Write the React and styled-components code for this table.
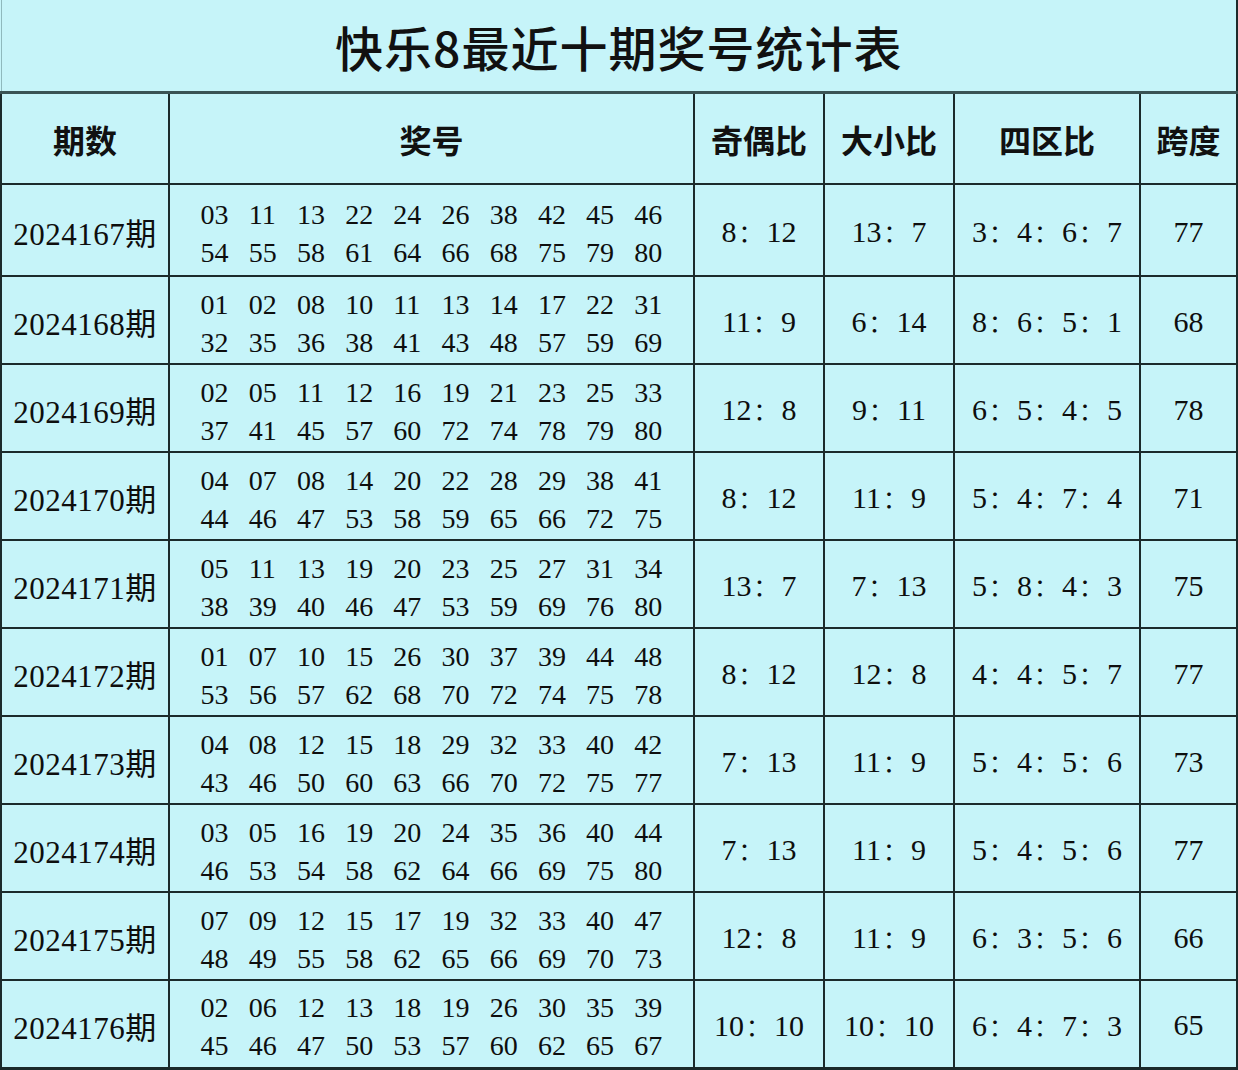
import React from 'react';
import styled, { createGlobalStyle } from 'styled-components';

const GlobalStyle = createGlobalStyle`
  html, body {
    margin: 0;
    padding: 0;
    background: #c6f4f9;
  }
`;

const rows = [
  {
    period: '2024167',
    nums: ['03 11 13 22 24 26 38 42 45 46', '54 55 58 61 64 66 68 75 79 80'],
    oddEven: ['8', '12'],
    bigSmall: ['13', '7'],
    zones: ['3', '4', '6', '7'],
    span: '77',
  },
  {
    period: '2024168',
    nums: ['01 02 08 10 11 13 14 17 22 31', '32 35 36 38 41 43 48 57 59 69'],
    oddEven: ['11', '9'],
    bigSmall: ['6', '14'],
    zones: ['8', '6', '5', '1'],
    span: '68',
  },
  {
    period: '2024169',
    nums: ['02 05 11 12 16 19 21 23 25 33', '37 41 45 57 60 72 74 78 79 80'],
    oddEven: ['12', '8'],
    bigSmall: ['9', '11'],
    zones: ['6', '5', '4', '5'],
    span: '78',
  },
  {
    period: '2024170',
    nums: ['04 07 08 14 20 22 28 29 38 41', '44 46 47 53 58 59 65 66 72 75'],
    oddEven: ['8', '12'],
    bigSmall: ['11', '9'],
    zones: ['5', '4', '7', '4'],
    span: '71',
  },
  {
    period: '2024171',
    nums: ['05 11 13 19 20 23 25 27 31 34', '38 39 40 46 47 53 59 69 76 80'],
    oddEven: ['13', '7'],
    bigSmall: ['7', '13'],
    zones: ['5', '8', '4', '3'],
    span: '75',
  },
  {
    period: '2024172',
    nums: ['01 07 10 15 26 30 37 39 44 48', '53 56 57 62 68 70 72 74 75 78'],
    oddEven: ['8', '12'],
    bigSmall: ['12', '8'],
    zones: ['4', '4', '5', '7'],
    span: '77',
  },
  {
    period: '2024173',
    nums: ['04 08 12 15 18 29 32 33 40 42', '43 46 50 60 63 66 70 72 75 77'],
    oddEven: ['7', '13'],
    bigSmall: ['11', '9'],
    zones: ['5', '4', '5', '6'],
    span: '73',
  },
  {
    period: '2024174',
    nums: ['03 05 16 19 20 24 35 36 40 44', '46 53 54 58 62 64 66 69 75 80'],
    oddEven: ['7', '13'],
    bigSmall: ['11', '9'],
    zones: ['5', '4', '5', '6'],
    span: '77',
  },
  {
    period: '2024175',
    nums: ['07 09 12 15 17 19 32 33 40 47', '48 49 55 58 62 65 66 69 70 73'],
    oddEven: ['12', '8'],
    bigSmall: ['11', '9'],
    zones: ['6', '3', '5', '6'],
    span: '66',
  },
  {
    period: '2024176',
    nums: ['02 06 12 13 18 19 26 30 35 39', '45 46 47 50 53 57 60 62 65 67'],
    oddEven: ['10', '10'],
    bigSmall: ['10', '10'],
    zones: ['6', '4', '7', '3'],
    span: '65',
  },
];

const LINE = '#1b2a2b';

const Table = styled.table`
  width: 1236px;
  table-layout: fixed;
  border-collapse: collapse;
  background: #c6f4f9;
  color: #0e0e0e;
  border-left: 1px solid #8fb9bd;
  border-right: 2px solid ${LINE};
  border-bottom: 3px solid ${LINE};
`;

const TitleCell = styled.th`
  height: 91px;
  padding: 0;
  border-bottom: 3px solid #3a5354;
  font-family: 'Noto Sans CJK SC', sans-serif;
  font-weight: 500;
  font-size: 48px;
  letter-spacing: 1px;
  text-align: center;
  vertical-align: middle;
  color: #111;
`;

const HeadCell = styled.th`
  height: 89px;
  padding: 0;
  border: 2px solid ${LINE};
  font-family: 'Noto Sans CJK SC', sans-serif;
  font-weight: 700;
  font-size: 32px;
  text-align: center;
  vertical-align: middle;
  color: #111;
  white-space: nowrap;
`;

const Row = styled.tr`
  height: ${(p) => (p.$first ? 92 : 88)}px;
`;

const Cell = styled.td`
  padding: 0;
  border: 2px solid ${LINE};
  text-align: center;
  vertical-align: middle;
  font-family: 'Liberation Serif', 'Noto Sans CJK SC', serif;
  font-size: 30px;
  white-space: nowrap;
  padding-top: 3px;
`;

const PeriodText = styled.span`
  font-family: 'Liberation Serif', 'Noto Sans CJK SC', serif;
  font-size: 31px;
  letter-spacing: 0.5px;
`;

const NumGrid = styled.div`
  display: grid;
  grid-template-columns: repeat(10, 48.2px);
  justify-content: center;
  row-gap: 4px;
  font-family: 'Liberation Serif', serif;
  font-size: 28px;
  line-height: 34px;
  margin-left: 20px;
  padding-top: 4px;
`;

const Num = styled.span`
  text-align: left;
`;

const Ratio = styled.div`
  display: flex;
  justify-content: center;
  align-items: baseline;
  gap: ${(p) => p.$gap || 6}px;
`;

const Colon = styled.span`
  font-family: 'Noto Sans CJK SC', sans-serif;
  font-size: 24px;
  margin-left: -2px;
`;

const RatioText = ({ parts, gap }) => (
  <Ratio $gap={gap}>
    {parts.map((p, i) => (
      <React.Fragment key={i}>
        <span>{p}</span>
        {i < parts.length - 1 && <Colon>：</Colon>}
      </React.Fragment>
    ))}
  </Ratio>
);

const App = () => (
  <>
    <GlobalStyle />
    <Table>
      <colgroup>
        <col style={{ width: 168 }} />
        <col style={{ width: 525 }} />
        <col style={{ width: 130 }} />
        <col style={{ width: 130 }} />
        <col style={{ width: 186 }} />
        <col style={{ width: 97 }} />
      </colgroup>
      <thead>
        <tr>
          <TitleCell colSpan={6}>快乐8最近十期奖号统计表</TitleCell>
        </tr>
        <tr>
          <HeadCell>期数</HeadCell>
          <HeadCell>奖号</HeadCell>
          <HeadCell>奇偶比</HeadCell>
          <HeadCell>大小比</HeadCell>
          <HeadCell>四区比</HeadCell>
          <HeadCell>跨度</HeadCell>
        </tr>
      </thead>
      <tbody>
        {rows.map((r, idx) => (
          <Row key={r.period} $first={idx === 0}>
            <Cell>
              <PeriodText>
                {r.period}期
              </PeriodText>
            </Cell>
            <Cell>
              <NumGrid>
                {r.nums
                  .join(' ')
                  .split(' ')
                  .map((n, i) => (
                    <Num key={i}>{n}</Num>
                  ))}
              </NumGrid>
            </Cell>
            <Cell>
              <RatioText parts={r.oddEven} gap={4} />
            </Cell>
            <Cell>
              <RatioText parts={r.bigSmall} gap={4} />
            </Cell>
            <Cell>
              <RatioText parts={r.zones} gap={4} />
            </Cell>
            <Cell>{r.span}</Cell>
          </Row>
        ))}
      </tbody>
    </Table>
  </>
);

export default App;
